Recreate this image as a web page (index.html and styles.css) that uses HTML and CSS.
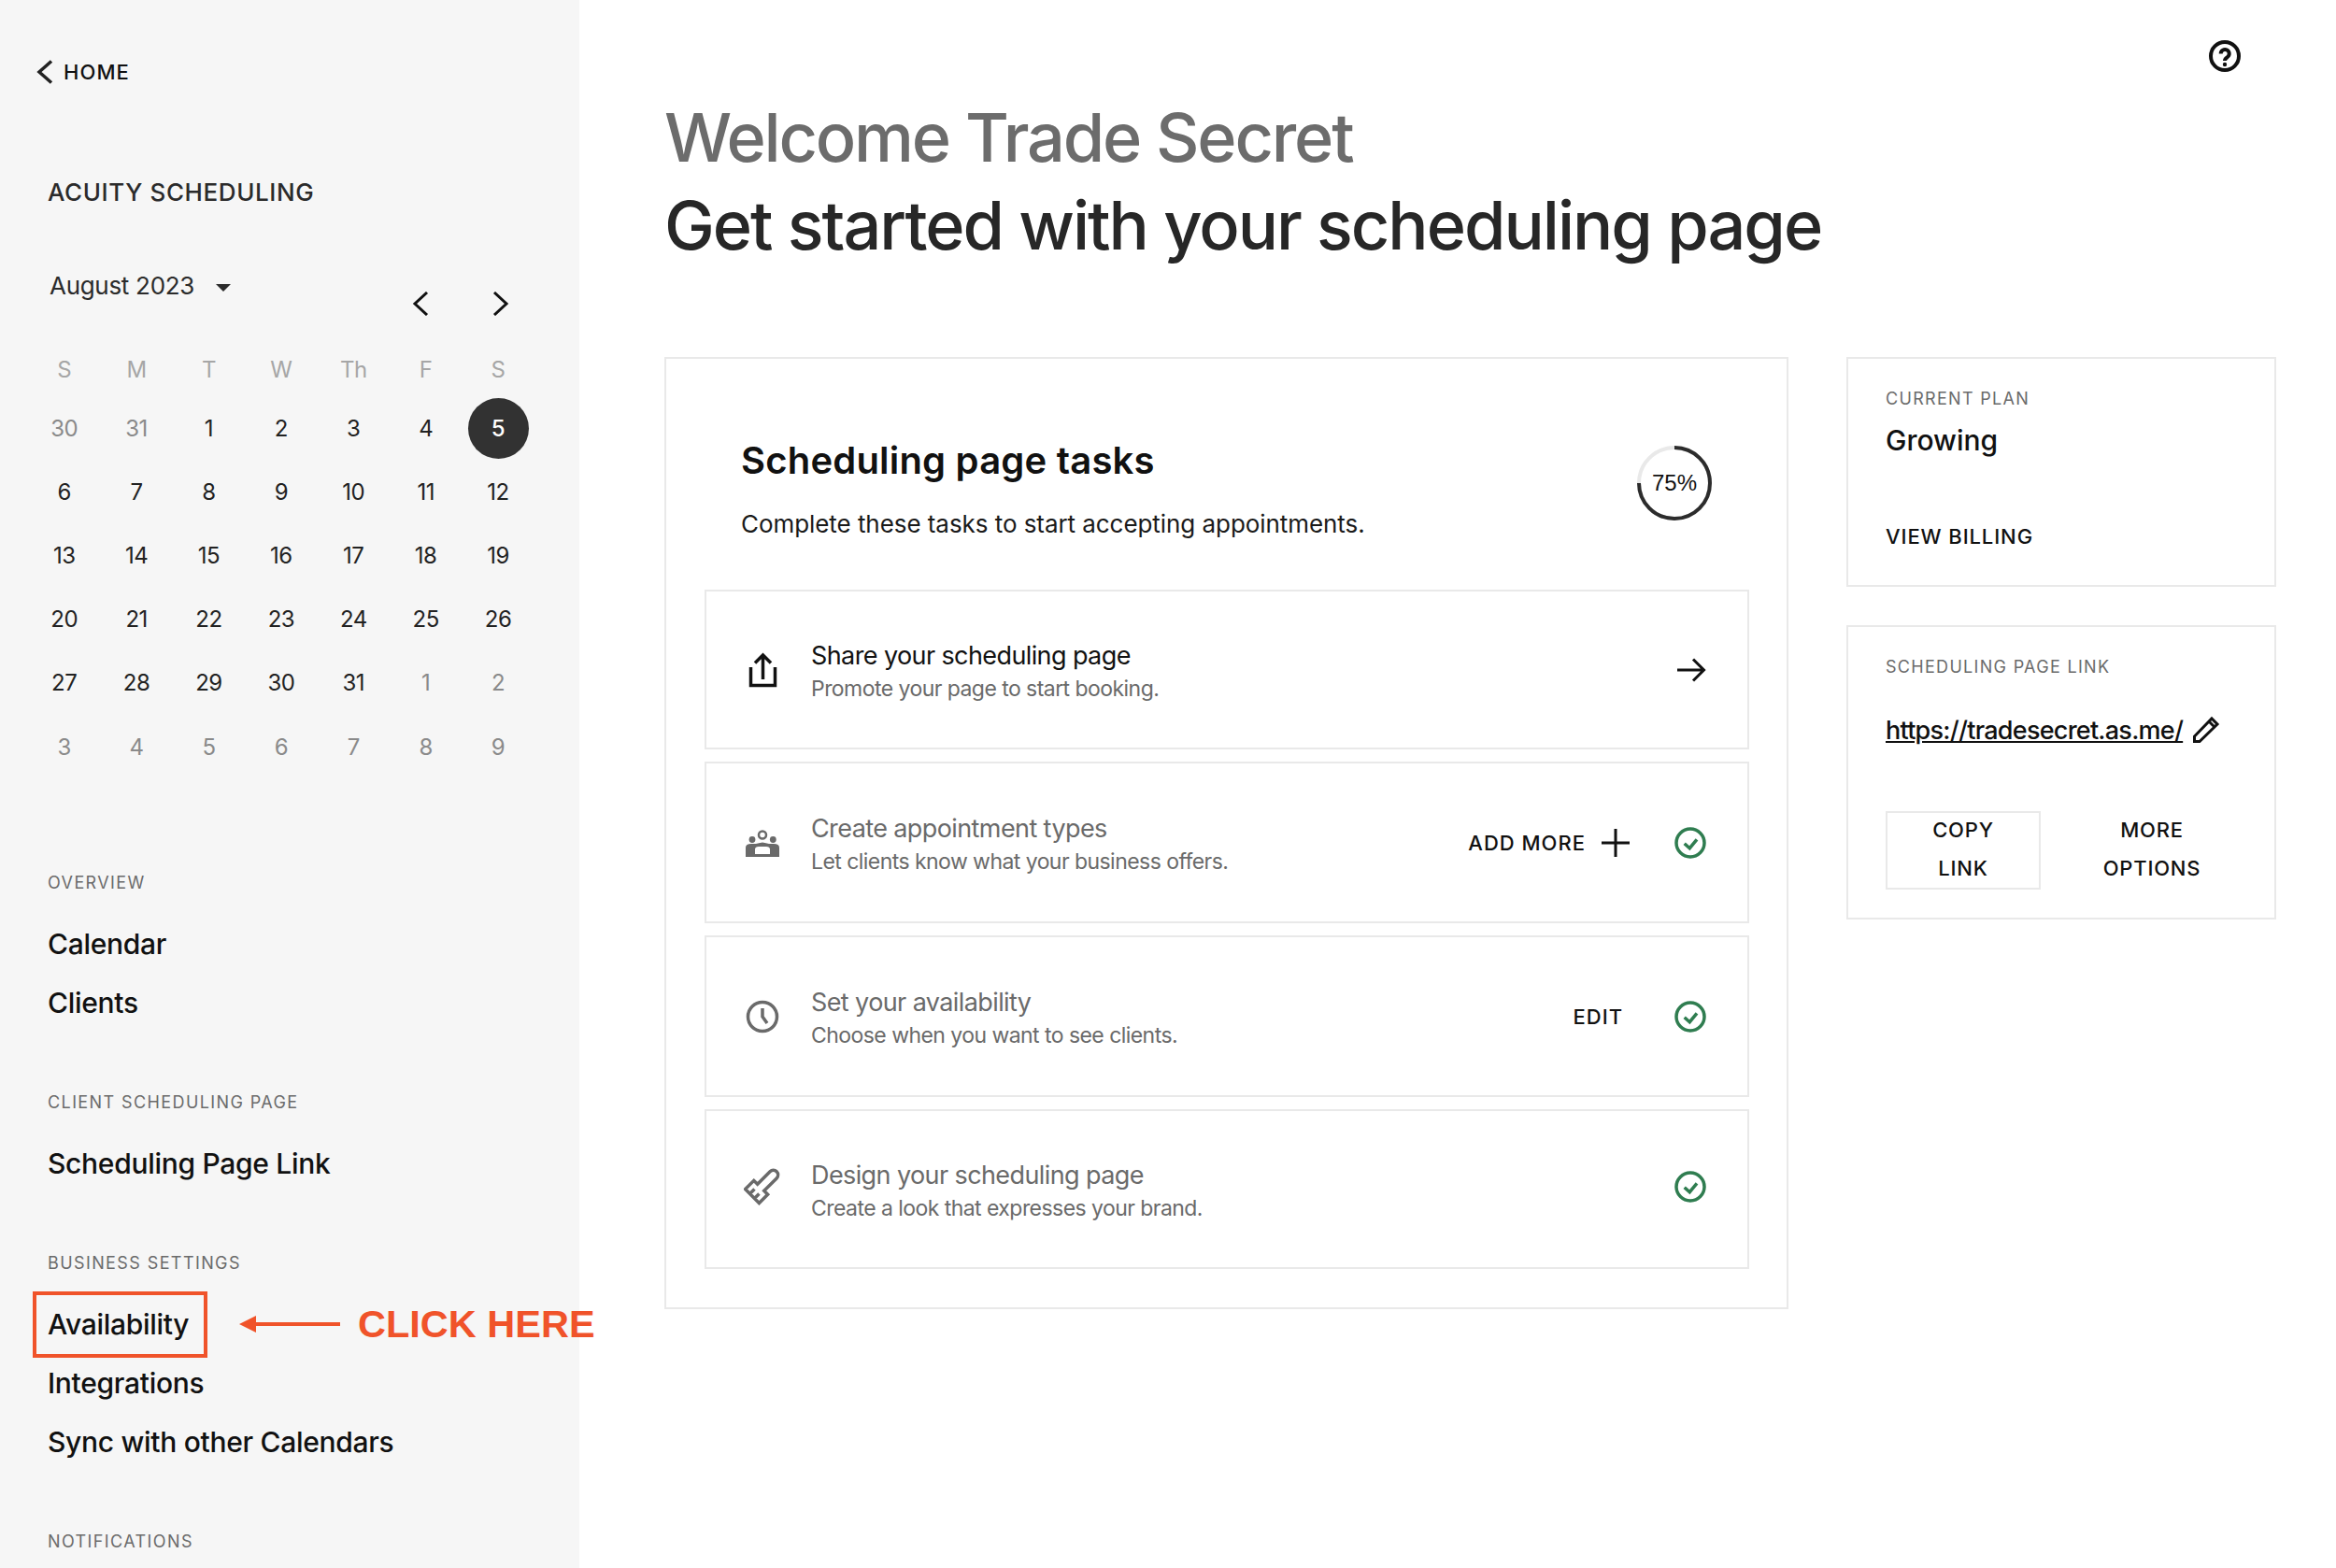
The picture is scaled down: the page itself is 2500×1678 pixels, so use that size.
FILE: index.html

```html
<!DOCTYPE html>
<html lang="en">
<head>
  <meta charset="UTF-8" />
  <title>Acuity Scheduling</title>
  <link rel="stylesheet" href="styles.css">
</head>
<body>
  <aside class="sidebar">
    <a class="home-link">
      <svg class="home-chevron" viewBox="0 0 18 26"><path d="M16 1.5 L3 13 L16 24.5"/></svg>
      HOME
    </a>
    <div class="app-name">ACUITY SCHEDULING</div>

    <div class="month-head">
      <span class="month-name">August 2023</span>
      <span class="month-caret"></span>
      <div class="month-nav">
        <svg viewBox="0 0 18 26"><path d="M16 1 L3 13 L16 25"/></svg>
        <svg viewBox="0 0 18 26"><path d="M2 1 L15 13 L2 25"/></svg>
      </div>
    </div>

    <div class="cal">
      <span class="wd">S</span><span class="wd">M</span><span class="wd">T</span><span class="wd">W</span><span class="wd">Th</span><span class="wd">F</span><span class="wd">S</span>
      <span class="day dim">30</span><span class="day dim">31</span><span class="day">1</span><span class="day">2</span><span class="day">3</span><span class="day">4</span><span class="day"><b class="today">5</b></span>
      <span class="day">6</span><span class="day">7</span><span class="day">8</span><span class="day">9</span><span class="day">10</span><span class="day">11</span><span class="day">12</span>
      <span class="day">13</span><span class="day">14</span><span class="day">15</span><span class="day">16</span><span class="day">17</span><span class="day">18</span><span class="day">19</span>
      <span class="day">20</span><span class="day">21</span><span class="day">22</span><span class="day">23</span><span class="day">24</span><span class="day">25</span><span class="day">26</span>
      <span class="day">27</span><span class="day">28</span><span class="day">29</span><span class="day">30</span><span class="day">31</span><span class="day dim">1</span><span class="day dim">2</span>
      <span class="day dim">3</span><span class="day dim">4</span><span class="day dim">5</span><span class="day dim">6</span><span class="day dim">7</span><span class="day dim">8</span><span class="day dim">9</span>
    </div>

    <div class="nav-group first">
      <div class="label">OVERVIEW</div>
      <a class="nav-item">Calendar</a>
      <a class="nav-item">Clients</a>
    </div>
    <div class="nav-group">
      <div class="label">CLIENT SCHEDULING PAGE</div>
      <a class="nav-item">Scheduling Page Link</a>
    </div>
    <div class="nav-group">
      <div class="label">BUSINESS SETTINGS</div>
      <a class="nav-item marked">
        Availability
        <span class="mark-box"></span>
        <svg class="mark-arrow" viewBox="0 0 108 18"><path d="M0 9 L18 0 V7 H108 V11 H18 V18 Z"/></svg>
        <span class="mark-text">CLICK HERE</span>
      </a>
      <a class="nav-item">Integrations</a>
      <a class="nav-item">Sync with other Calendars</a>
    </div>
    <div class="nav-group">
      <div class="label">NOTIFICATIONS</div>
    </div>
  </aside>

  <main class="main">
    <svg class="help" viewBox="0 0 36 36">
      <circle cx="18" cy="18" r="15"/>
      <path d="M13.7 15.5 a4.5 4.5 0 1 1 7 3.7 c-1.9 1.2 -2.7 2 -2.7 3.8"/>
      <circle class="help-dot" cx="18" cy="27" r="2.2"/>
    </svg>

    <h1 class="welcome"><span>Welcome Trade Secret</span>Get started with your scheduling page</h1>

    <div class="columns">
      <section class="tasks">
        <div class="tasks-head">
          <div>
            <h2>Scheduling page tasks</h2>
            <p>Complete these tasks to start accepting appointments.</p>
          </div>
          <div class="progress">
            <svg viewBox="0 0 80 80">
              <circle class="track" cx="40" cy="40" r="38"/>
              <path class="fill" d="M40 2 A38 38 0 1 1 2 40"/>
            </svg>
            <span>75%</span>
          </div>
        </div>

        <div class="task active short">
          <svg class="task-icon" viewBox="0 0 40 40"><path class="line" d="M7.5 17 V36.5 H33.5 V17 M20.5 30 V4.5 M12 12.5 L20.5 4 L29 12.5"/></svg>
          <div class="task-text">
            <div class="task-title">Share your scheduling page</div>
            <div class="task-sub">Promote your page to start booking.</div>
          </div>
          <svg class="go" viewBox="0 0 32 26"><path d="M1 13 H29 M18 1.5 L29.5 13 L18 24.5"/></svg>
        </div>

        <div class="task">
          <svg class="task-icon" viewBox="0 0 40 40">
            <circle class="line thin" cx="20" cy="11.5" r="4"/>
            <circle class="solid" cx="9" cy="16.5" r="3.4"/>
            <circle class="solid" cx="31.3" cy="16.5" r="3.4"/>
            <path class="solid" fill-rule="evenodd" d="M2 35 V25 Q2 21 8 21 H13 Q16 20 20 19.5 Q24 20 27 21 H32 Q38 21 38 25 V35 Z M12 32 H28 V27 Q28 24 24 24 H16 Q12 24 12 27 Z"/>
          </svg>
          <div class="task-text">
            <div class="task-title">Create appointment types</div>
            <div class="task-sub">Let clients know what your business offers.</div>
          </div>
          <a class="task-action">ADD MORE</a>
          <svg class="plus" viewBox="0 0 30 30"><path d="M0 15 H30 M15 0 V30"/></svg>
          <svg class="check" viewBox="0 0 34 34"><circle cx="17" cy="17" r="15"/><path d="M10.7 17.7 L16.3 22.7 L24 13.3"/></svg>
        </div>

        <div class="task">
          <svg class="task-icon" viewBox="0 0 40 40"><circle class="line" cx="20" cy="20" r="15.5"/><path class="line" d="M20 11 V20 L25 27"/></svg>
          <div class="task-text">
            <div class="task-title">Set your availability</div>
            <div class="task-sub">Choose when you want to see clients.</div>
          </div>
          <a class="task-action edit">EDIT</a>
          <svg class="check" viewBox="0 0 34 34"><circle cx="17" cy="17" r="15"/><path d="M10.7 17.7 L16.3 22.7 L24 13.3"/></svg>
        </div>

        <div class="task short raised">
          <svg class="task-icon" viewBox="0 0 40 40">
            <g transform="translate(8.3 30.7) rotate(45)">
              <path class="line" d="M-10.5 -1 H10.5 V-14 H5 V-33 a5 5 0 0 0 -10 0 V-14 H-10.5 Z M-3.5 -1 V-8 M3.5 -1 V-8"/>
            </g>
          </svg>
          <div class="task-text">
            <div class="task-title">Design your scheduling page</div>
            <div class="task-sub">Create a look that expresses your brand.</div>
          </div>
          <svg class="check" viewBox="0 0 34 34"><circle cx="17" cy="17" r="15"/><path d="M10.7 17.7 L16.3 22.7 L24 13.3"/></svg>
        </div>
      </section>

      <div class="side">
        <section class="side-card plan">
          <div class="side-label">CURRENT PLAN</div>
          <div class="plan-name">Growing</div>
          <a class="btn-text">VIEW BILLING</a>
        </section>
        <section class="side-card link-card">
          <div class="side-label">SCHEDULING PAGE LINK</div>
          <div class="page-link">
            <a>https://tradesecret.as.me/</a>
            <svg viewBox="0 0 30 30"><path d="M2.5 27.5 V22 L21 3 L27 9 L8 27.5 Z M18 6 L24 12"/></svg>
          </div>
          <div class="link-actions">
            <a class="link-btn boxed">COPY LINK</a>
            <a class="link-btn more">MORE OPTIONS</a>
          </div>
        </section>
      </div>
    </div>
  </main>
</body>
</html>
```

FILE: styles.css

```css
* {
  box-sizing: border-box;
}

body {
  font-family: Inter, "Liberation Sans", sans-serif;
  margin: 0;
  background-color: #fff;
  color: #111;
  display: flex;
  height: 100vh;
  overflow: hidden;
}

svg {
  display: block;
  flex: none;
}

/* sidebar */
.sidebar {
  width: 620px;
  flex: none;
  background: #f6f6f6;
  padding: 60px 0 0 51px;
  position: relative;
  z-index: 1;
}

.home-link {
  display: flex;
  align-items: center;
  height: 34px;
  margin-left: -12px;
  font-size: 22px;
  font-weight: 500;
  letter-spacing: 1.1px;
}

.home-chevron {
  width: 18px;
  height: 26px;
  margin-right: 11px;
  fill: none;
  stroke: #222;
  stroke-width: 3.5;
}

.app-name {
  margin-top: 95px;
  line-height: 34px;
  font-size: 26px;
  font-weight: 500;
  letter-spacing: 0.6px;
  color: #2b2b2b;
}

.month-head {
  display: flex;
  align-items: flex-start;
  margin-top: 66px;
  height: 78px;
}

.month-name {
  font-size: 26px;
  line-height: 34px;
  margin-left: 2px;
  letter-spacing: -0.3px;
  color: #2b2b2b;
}

.month-caret {
  margin: 15px 0 0 23px;
  border-left: 8px solid transparent;
  border-right: 8px solid transparent;
  border-top: 8px solid #2b2b2b;
}

.month-nav {
  display: flex;
  gap: 68px;
  margin: 23px 75px 0 auto;
}

.month-nav svg {
  width: 18px;
  height: 26px;
  fill: none;
  stroke: #111;
  stroke-width: 3;
}

.cal {
  display: grid;
  grid-template-columns: repeat(7, 77.4px);
  grid-template-rows: 57px repeat(6, 68.2px);
  margin-left: -21px;
  width: 542px;
}

.wd,
.day {
  display: flex;
  align-items: center;
  justify-content: center;
  font-size: 24px;
  letter-spacing: -0.5px;
}

.wd {
  color: #a6a6a6;
}

.day {
  color: #222;
}

.day.dim {
  color: #8a8a8a;
}

.today {
  width: 65px;
  height: 65px;
  border-radius: 50%;
  background: #323232;
  color: #fff;
  font-weight: 500;
  display: flex;
  align-items: center;
  justify-content: center;
}

.nav-group {
  margin-top: 75px;
  display: flex;
  flex-direction: column;
  gap: 23px;
}

.nav-group.first {
  margin-top: 100px;
}

.label {
  font-size: 18px;
  line-height: 24px;
  letter-spacing: 1.4px;
  color: #6b6b6b;
  margin-bottom: 10px;
}

.nav-item {
  font-size: 30px;
  line-height: 40px;
  font-weight: 500;
  letter-spacing: -0.3px;
  position: relative;
}

.mark-box {
  position: absolute;
  left: -16px;
  top: -15px;
  width: 187px;
  height: 71px;
  border: 4px solid #f0532a;
}

.mark-arrow {
  position: absolute;
  left: 205px;
  top: 11px;
  width: 108px;
  height: 18px;
  fill: #f0532a;
}

.mark-text {
  position: absolute;
  left: 332px;
  top: -1px;
  white-space: nowrap;
  font-family: "Liberation Sans", sans-serif;
  font-size: 41.5px;
  line-height: 42px;
  font-weight: 700;
  letter-spacing: 0;
  color: #f0532a;
}

/* main area */
.main {
  flex: 1;
  padding: 100px 65px 0 91px;
  position: relative;
}

.help {
  position: absolute;
  right: 102px;
  top: 42px;
  width: 36px;
  height: 36px;
  fill: none;
  stroke: #111;
  stroke-width: 4;
}

.help-dot {
  fill: #111;
  stroke: none;
}

.welcome {
  margin: 0;
  font-size: 72px;
  line-height: 94px;
  font-weight: 500;
  letter-spacing: -2px;
  color: #272727;
}

.welcome span {
  display: block;
  letter-spacing: -2.2px;
  color: #6c6c6c;
}

.columns {
  display: flex;
  gap: 62px;
  margin-top: 94px;
}

.tasks {
  width: 1203px;
  height: 1019px;
  border: 2px solid #e9e9e9;
  padding: 0 40px 0 41px;
}

.tasks-head {
  display: flex;
  justify-content: space-between;
  padding: 84px 40px 52px 39px;
}

.tasks-head h2 {
  margin: 0;
  font-size: 40px;
  line-height: 50px;
  font-weight: 600;
  letter-spacing: 0.2px;
  color: #111;
}

.tasks-head p {
  margin: 25px 0 0;
  font-size: 26px;
  line-height: 36px;
  letter-spacing: -0.06px;
  color: #1a1a1a;
}

.progress {
  position: relative;
  width: 80px;
  height: 80px;
  margin-top: 9px;
  font-family: "Liberation Sans", sans-serif;
  font-size: 24px;
}

.progress svg {
  width: 80px;
  height: 80px;
  fill: none;
  stroke-width: 4;
}

.track {
  stroke: #e9e9e9;
}

.fill {
  stroke: #2c2c2c;
}

.progress span {
  position: absolute;
  inset: 0;
  display: flex;
  align-items: center;
  justify-content: center;
}

.task {
  display: flex;
  align-items: center;
  height: 173px;
  margin-bottom: 13px;
  border: 2px solid #e9e9e9;
  padding: 0 44px 0 40px;
  color: #6a6a6a;
}

.task.short {
  height: 171px;
}

.task.raised .check {
  margin-bottom: 6px;
}

.task.raised .task-icon {
  margin-bottom: 6px;
}

.task-icon {
  width: 40px;
  height: 40px;
  margin-right: 32px;
}

.line {
  fill: none;
  stroke: #6a6a6a;
  stroke-width: 3.5;
}

.line.thin {
  stroke-width: 2.5;
}

.solid {
  fill: #6a6a6a;
}

.active .line {
  stroke: #111;
}

.task-text {
  flex: 1;
  padding-top: 4px;
}

.task-title {
  font-size: 27px;
  line-height: 36px;
  letter-spacing: -0.6px;
}

.task-sub {
  font-size: 23px;
  line-height: 34px;
  letter-spacing: -0.55px;
}

.active .task-title {
  color: #111;
}

.go {
  width: 32px;
  height: 26px;
  fill: none;
  stroke: #111;
  stroke-width: 3;
}

.task-action {
  font-size: 22px;
  font-weight: 500;
  letter-spacing: 1px;
  color: #111;
}

.task-action.edit {
  margin-right: 55px;
}

.plus {
  width: 30px;
  height: 30px;
  margin: 0 48px 0 17px;
  fill: none;
  stroke: #111;
  stroke-width: 3;
}

.check {
  width: 34px;
  height: 34px;
  fill: none;
  stroke: #2f7d50;
  stroke-width: 3.5;
}

/* right column */
.side {
  width: 460px;
  display: flex;
  flex-direction: column;
  gap: 41px;
}

.side-card {
  border: 2px solid #e9e9e9;
  padding: 0 40px;
}

.plan {
  height: 246px;
  padding-top: 31px;
}

.link-card {
  height: 315px;
  padding-top: 31px;
}

.side-label {
  font-size: 18px;
  line-height: 24px;
  letter-spacing: 1.3px;
  color: #6b6b6b;
}

.plan-name {
  font-size: 30px;
  line-height: 40px;
  font-weight: 500;
  margin-top: 12px;
}

.btn-text {
  display: block;
  margin-top: 68px;
  font-size: 22px;
  line-height: 30px;
  font-weight: 500;
  letter-spacing: 0.9px;
}

.page-link {
  display: flex;
  align-items: center;
  gap: 10px;
  margin-top: 35px;
  height: 40px;
  font-size: 27px;
  font-weight: 500;
  letter-spacing: -0.75px;
}

.page-link a {
  text-decoration: underline;
}

.page-link svg {
  width: 30px;
  height: 30px;
  fill: none;
  stroke: #111;
  stroke-width: 3;
}

.link-actions {
  display: flex;
  margin-top: 67px;
}

.link-btn {
  flex: none;
  width: 166px;
  height: 84px;
  padding: 0 35px;
  font-size: 22px;
  line-height: 41px;
  font-weight: 500;
  letter-spacing: 0.8px;
  text-align: center;
}

.link-btn.boxed {
  box-shadow: inset 0 0 0 2px #e9e9e9;
}

.link-btn.more {
  margin-left: 29px;
  width: 180px;
  padding: 0 20px;
}
```
